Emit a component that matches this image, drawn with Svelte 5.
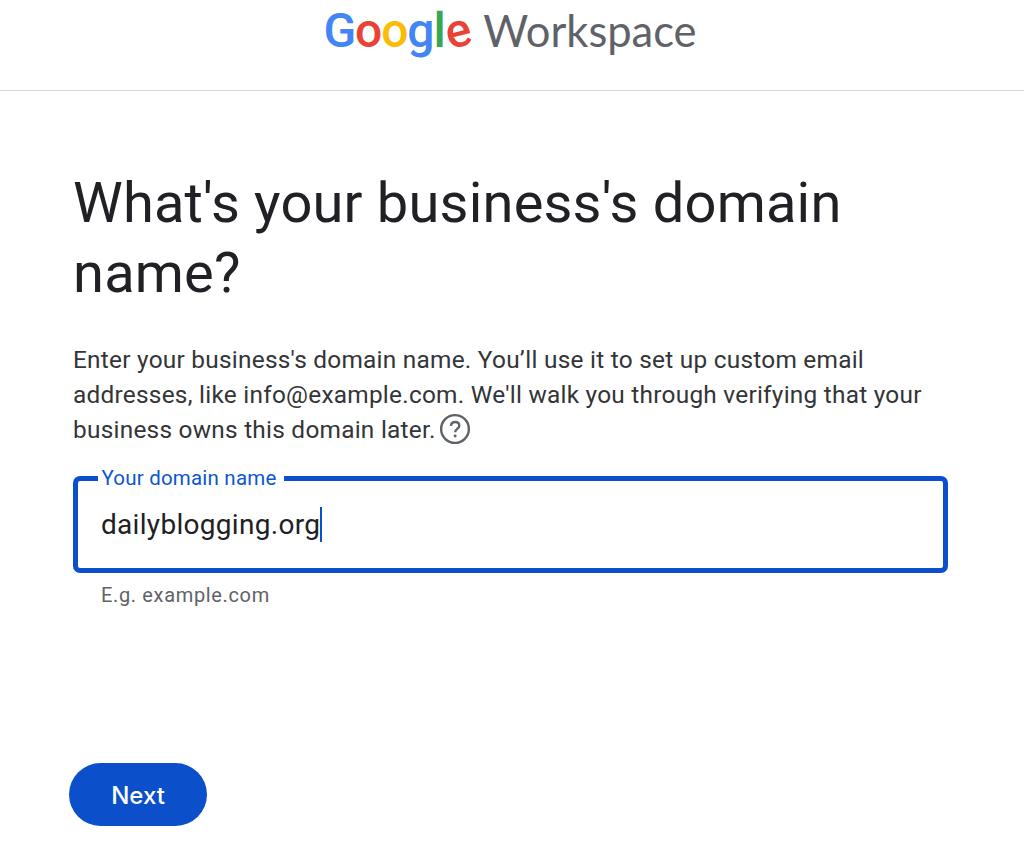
<script lang="ts">
  let domain = 'dailyblogging.org';
  const logo = [
    ['G', '#4285f4'],
    ['o', '#ea4335'],
    ['o', '#fbbc05'],
    ['g', '#4285f4'],
    ['l', '#34a853'],
    ['e', '#ea4335']
  ];
</script>

<div class="page">
  <header class="topbar">
    <div class="logo">
      <span class="google">{#each logo as [ch, color]}<span style="color: {color}">{ch}</span>{/each}</span>
      <span class="product">Workspace</span>
    </div>
  </header>

  <main class="content">
    <h1>What's your business's domain name?</h1>
    <p class="lead">
      Enter your business's domain name. You’ll use it to set up custom email addresses, like
      info@example.com. We'll walk you through verifying that your business owns this domain later.
      <svg class="help" viewBox="0 0 24 24" width="32" height="32" aria-hidden="true">
        <circle cx="12" cy="12" r="10.4" fill="none" stroke="#5f6368" stroke-width="1.8" />
        <path d="M8.9 9.6c.2-1.7 1.5-2.8 3.2-2.8 1.8 0 3.1 1.1 3.1 2.7 0 2.4-3.1 2.5-3.1 5" fill="none" stroke="#5f6368" stroke-width="1.8" />
        <circle cx="12.1" cy="17.2" r="1.1" fill="#5f6368" />
      </svg>
    </p>

    <div class="field">
      <span class="label">Your domain name</span>
      <div class="value">{domain}<span class="caret"></span></div>
    </div>
    <div class="hint">E.g. example.com</div>

    <button class="next" type="button">Next</button>
  </main>
</div>

<style>
  :global(body) {
    margin: 0;
    background: #fff;
  }

  .page {
    width: 1024px;
    height: 863px;
    overflow: hidden;
    font-family: Roboto, "Liberation Sans", sans-serif;
    color: #202124;
  }

  .topbar {
    height: 90px;
    border-bottom: 1px solid #d5d6d9;
    display: flex;
    justify-content: center;
    align-items: flex-start;
  }

  .logo {
    display: flex;
    gap: 14px;
    align-items: baseline;
    padding-top: 2px;
    margin-right: 4px;
    line-height: 56px;
  }

  .google {
    font-size: 48px;
    font-weight: 500;
    letter-spacing: -1.1px;
  }

  .google span:last-child {
    display: inline-block;
    transform: rotate(-14deg);
  }

  .product {
    color: #5f6368;
    font-family: Lato, sans-serif;
    font-size: 43.5px;
  }

  .content {
    padding: 77px 73px 0;
  }

  h1 {
    margin: 0;
    font-size: 56px;
    font-weight: 400;
    line-height: 70px;
    letter-spacing: 0.2px;
  }

  .lead {
    margin: 34px 0 0;
    font-size: 24.4px;
    line-height: 35px;
    letter-spacing: 0.25px;
    color: #333538;
  }

  .help {
    vertical-align: -7px;
    margin-left: -3px;
  }

  .field {
    position: relative;
    box-sizing: border-box;
    width: 875px;
    height: 97px;
    margin-top: 29px;
    border: 5px solid #0b4fcb;
    border-radius: 7px;
    padding: 25.5px 23px 0;
  }

  .label {
    position: absolute;
    top: -15.5px;
    left: 19.5px;
    padding: 0 8px 0 4px;
    background: #fff;
    color: #0b57d0;
    font-size: 20.5px;
    line-height: 24px;
    letter-spacing: 0.2px;
  }

  .value {
    font-size: 28px;
    line-height: 36px;
    letter-spacing: 0.3px;
    display: flex;
    align-items: center;
  }

  .caret {
    width: 2px;
    height: 35px;
    background: #0b4fcb;
  }

  .hint {
    margin: 9px 0 0 28px;
    font-size: 20px;
    line-height: 26px;
    letter-spacing: 0.65px;
    color: #5f6368;
  }

  .next {
    display: block;
    width: 138px;
    height: 63px;
    margin: 155px 0 0 -4px;
    border: 0;
    border-radius: 32px;
    background: #0b4fcb;
    color: #fff;
    font-family: Inter, sans-serif;
    font-size: 24px;
    font-weight: 500;
    padding: 1px 0 0;
  }
</style>
